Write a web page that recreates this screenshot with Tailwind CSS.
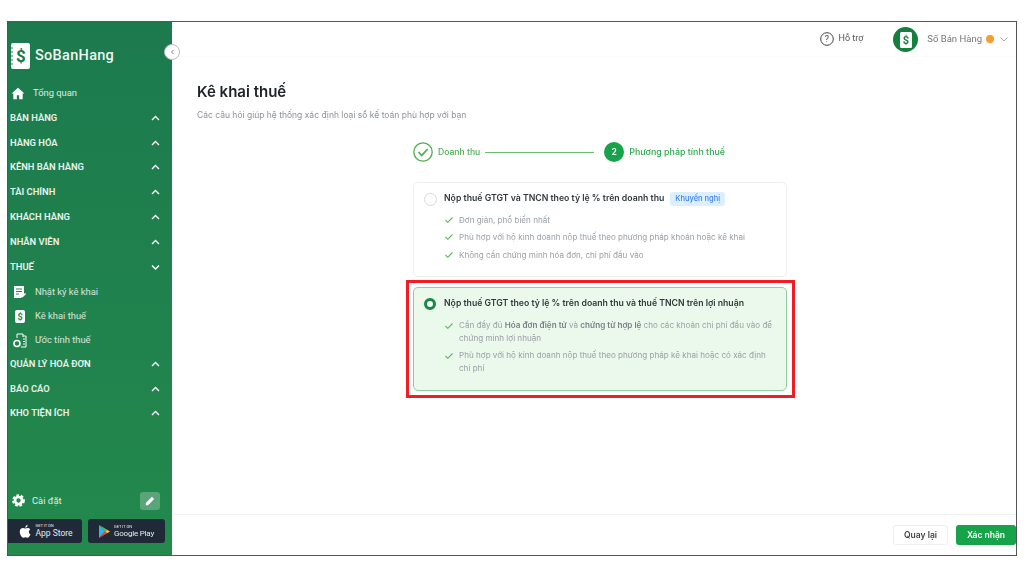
<!DOCTYPE html>
<html lang="vi">
<head>
  <meta charset="UTF-8" />
  <title>Kê khai thuế</title>
  <script src="https://cdn.jsdelivr.net/npm/@tailwindcss/browser@4"></script>
</head>
<body class="bg-white font-['Inter','Noto_Sans',sans-serif] overflow-hidden">
  <div class="relative w-[1024px] h-[577px] pt-[21px] pl-[7px] blur-[0.5px]">
    <!-- Frame -->
    <div class="relative flex w-[1010px] h-[535px] border border-[#555]">

      <!-- Sidebar -->
      <aside class="flex flex-col w-[164px] shrink-0 bg-gradient-to-b from-[#1c7a4e] to-[#23894c] text-white">
        <div class="flex items-center h-[35px] mt-[16px] pl-[2px] gap-[5px]">
          <svg width="20" height="26" viewBox="0 0 20 26">
            <rect x="1" y="0" width="19" height="26" rx="2" fill="#fff"/>
            <path d="M0 5h3M0 9h3M0 13h3M0 17h3M0 21h3" stroke="#1c7a4e" stroke-width="1"/>
            <text x="11" y="19" text-anchor="middle" font-size="17" font-weight="700" fill="#1c7a4e" font-family="Roboto">$</text>
          </svg>
          <span class="font-['Roboto'] text-[14.5px] font-medium tracking-[0.3px] text-white/95">SoBanHang</span>
        </div>

        <nav class="mt-[8px] flex flex-col font-['Roboto'] text-[9.4px]">
          <a class="flex items-center h-[24.5px] pl-[3px] gap-[8px] text-white/85">
            <svg width="14" height="13" viewBox="0 0 24 22" fill="#fff"><path d="M12 1 1 11h3v10h6v-7h4v7h6V11h3z"/></svg>
            <span>Tổng quan</span>
          </a>
          <a class="flex items-center justify-between h-[24.8px] pl-[2px] pr-[12px] font-semibold text-white/90">BÁN HÀNG<svg width="9" height="6" viewBox="0 0 9 6" fill="none" stroke="#fff" stroke-width="1.4"><path d="M1 5 4.5 1.5 8 5"/></svg></a>
          <a class="flex items-center justify-between h-[24.8px] pl-[2px] pr-[12px] font-semibold text-white/90">HÀNG HÓA<svg width="9" height="6" viewBox="0 0 9 6" fill="none" stroke="#fff" stroke-width="1.4"><path d="M1 5 4.5 1.5 8 5"/></svg></a>
          <a class="flex items-center justify-between h-[24.8px] pl-[2px] pr-[12px] font-semibold text-white/90">KÊNH BÁN HÀNG<svg width="9" height="6" viewBox="0 0 9 6" fill="none" stroke="#fff" stroke-width="1.4"><path d="M1 5 4.5 1.5 8 5"/></svg></a>
          <a class="flex items-center justify-between h-[24.8px] pl-[2px] pr-[12px] font-semibold text-white/90">TÀI CHÍNH<svg width="9" height="6" viewBox="0 0 9 6" fill="none" stroke="#fff" stroke-width="1.4"><path d="M1 5 4.5 1.5 8 5"/></svg></a>
          <a class="flex items-center justify-between h-[24.8px] pl-[2px] pr-[12px] font-semibold text-white/90">KHÁCH HÀNG<svg width="9" height="6" viewBox="0 0 9 6" fill="none" stroke="#fff" stroke-width="1.4"><path d="M1 5 4.5 1.5 8 5"/></svg></a>
          <a class="flex items-center justify-between h-[24.8px] pl-[2px] pr-[12px] font-semibold text-white/90">NHÂN VIÊN<svg width="9" height="6" viewBox="0 0 9 6" fill="none" stroke="#fff" stroke-width="1.4"><path d="M1 5 4.5 1.5 8 5"/></svg></a>
          <a class="flex items-center justify-between h-[24.8px] pl-[2px] pr-[12px] font-semibold text-white/90">THUẾ<svg width="9" height="6" viewBox="0 0 9 6" fill="none" stroke="#fff" stroke-width="1.4"><path d="M1 1.5 4.5 5 8 1.5"/></svg></a>

          <a class="flex items-center h-[25px] pl-[5px] gap-[8px] text-white/80">
            <svg width="14" height="14" viewBox="0 0 14 14"><path d="M1 1h10v9l-3 3H1z" fill="#fff"/><path d="M3 4h6M3 6.500h6M3 9h3" stroke="#23894c"/><path d="m9 12 3.500-3.500" stroke="#fff" stroke-width="1.400"/></svg>
            <span>Nhật ký kê khai</span>
          </a>
          <a class="flex items-center h-[24px] pl-[6px] gap-[9px] text-white/80">
            <svg width="12" height="13" viewBox="0 0 12 13"><rect x="1" width="10" height="13" rx="2" fill="#fff"/><text x="6" y="10" text-anchor="middle" font-size="9" font-weight="700" fill="#23894c" font-family="Roboto">$</text></svg>
            <span>Kê khai thuế</span>
          </a>
          <a class="flex items-center h-[24px] pl-[5px] gap-[8px] text-white/80">
            <svg width="14" height="15" viewBox="0 0 14 15" fill="none" stroke="#fff"><path d="M4 5V1h6v3M10 3h3v11H8"/><circle cx="4" cy="10.500" r="3" stroke-width="1.600"/><path d="M10 6h2M10 8.500h2M10 11h2"/></svg>
            <span>Ước tính thuế</span>
          </a>

          <a class="flex items-center justify-between h-[24.5px] pl-[2px] pr-[12px] font-semibold text-white/90">QUẢN LÝ HOÁ ĐƠN<svg width="9" height="6" viewBox="0 0 9 6" fill="none" stroke="#fff" stroke-width="1.4"><path d="M1 5 4.5 1.5 8 5"/></svg></a>
          <a class="flex items-center justify-between h-[24.5px] pl-[2px] pr-[12px] font-semibold text-white/90">BÁO CÁO<svg width="9" height="6" viewBox="0 0 9 6" fill="none" stroke="#fff" stroke-width="1.4"><path d="M1 5 4.5 1.5 8 5"/></svg></a>
          <a class="flex items-center justify-between h-[24.5px] pl-[2px] pr-[12px] font-semibold text-white/90">KHO TIỆN ÍCH<svg width="9" height="6" viewBox="0 0 9 6" fill="none" stroke="#fff" stroke-width="1.4"><path d="M1 5 4.5 1.5 8 5"/></svg></a>
        </nav>

        <div class="mt-auto">
          <div class="flex items-center justify-between pl-[4px] pr-[12px] h-[18px]">
            <div class="flex items-center gap-[7px] font-['Roboto'] text-[9.4px] text-white/85">
              <svg width="13" height="13" viewBox="0 0 24 24" fill="none" stroke="#fff"><circle cx="12" cy="12" r="6.500" stroke-width="5"/><circle cx="12" cy="12" r="10" stroke-width="3.500" stroke-dasharray="5 3.380"/></svg>
              <span>Cài đặt</span>
            </div>
            <div class="flex items-center justify-center w-[20px] h-[18px] rounded-[3px] bg-white/25">
              <svg width="10" height="10" viewBox="0 0 10 10" fill="#fff"><path d="M7 .8 9.200 3 3 9.200H.8V7z"/></svg>
            </div>
          </div>
          <div class="flex gap-[6px] mt-[9px] mb-[12px]">
            <div class="flex items-center justify-center gap-[4px] w-[74px] h-[24px] rounded-r-[3px] bg-[#1f2937] pl-[2px]">
              <svg width="12" height="14" viewBox="0 0 24 28" fill="#fff"><path d="M17 3c0 2.500-2 4.500-4.500 4.500C12.500 5 14.500 3 17 1.500zM12.500 9c1.500 0 3-1 5-1 2 0 4 1 5 3-4 2.500-3.500 8 .5 9.500-1 3-3.500 7-6 7-1.500 0-2.500-1-4-1s-2.500 1-4 1C5.500 27.500 1.500 21 1.500 15.500 1.500 10.500 4.500 8 7.500 8c2 0 3.500 1 5 1z"/></svg>
              <div class="flex flex-col font-['Roboto'] text-white/90 leading-none">
                <span class="text-[4px] mb-[1px]">GET IT ON</span>
                <span class="text-[8.500px]">App Store</span>
              </div>
            </div>
            <div class="flex items-center justify-center gap-[4px] w-[77px] h-[24px] rounded-[3px] bg-[#1f2937]">
              <svg width="11" height="13" viewBox="0 0 12 14"><path d="M0 0 6.500 7 0 14z" fill="#29b6f6"/><path d="M0 0 9 5 6.500 7z" fill="#43c46a"/><path d="M0 14 9 9 6.500 7z" fill="#ef4444"/><path d="M9 5 12 7 9 9 6.500 7z" fill="#fbbf24"/></svg>
              <div class="flex flex-col font-['Roboto'] text-white/90 leading-none">
                <span class="text-[4px] mb-[1px]">GET IT ON</span>
                <span class="text-[8px] tracking-[-0.2px]">Google Play</span>
              </div>
            </div>
          </div>
        </div>
      </aside>

      <!-- Collapse toggle -->
      <button class="absolute left-[156px] top-[22px] flex items-center justify-center w-[16px] h-[16px] rounded-full bg-white border border-[#bbb]">
        <svg width="5" height="6" viewBox="0 0 5 6" fill="none" stroke="#888"><path d="M3.500 1 1.500 3l2 2"/></svg>
      </button>

      <!-- Main -->
      <main class="flex flex-col flex-1 min-w-0">
        <header class="flex items-center justify-end h-[35px] pr-[8px] border-b border-[#fafafa] font-['Roboto'] shrink-0">
          <svg width="14" height="14" viewBox="0 0 14 14" fill="none" stroke="#444"><circle cx="7" cy="7" r="6.300"/><text x="7" y="10" text-anchor="middle" font-size="9" fill="#444" stroke="none" font-family="Roboto">?</text></svg>
          <span class="ml-[5px] text-[9px] text-[#555]">Hỗ trợ</span>
          <div class="relative flex items-center justify-center ml-[30px] w-[25px] h-[25px] rounded-full bg-[#15803d] mt-[1px]">
            <svg width="13" height="16" viewBox="0 0 13 16"><rect x="1" width="12" height="16" rx="1.500" fill="#fff"/><text x="7" y="12" text-anchor="middle" font-size="11" font-weight="700" fill="#15803d" font-family="Roboto">$</text></svg>
          </div>
          <span class="ml-[9px] text-[9.5px] text-[#777]">Số Bán Hàng</span>
          <span class="ml-[4px] w-[8px] h-[8px] rounded-full bg-[#f59e2e]"></span>
          <svg class="ml-[6px]" width="8" height="5" viewBox="0 0 8 5" fill="none" stroke="#aaa"><path d="M.5.5 4 4 7.500.5"/></svg>
        </header>

        <div class="flex-1 min-h-0 pl-[25px]">
          <h1 class="mt-[24px] text-[15px] leading-[22px] font-semibold text-[#1f2328]">Kê khai thuế</h1>
          <p class="mt-[6px] text-[8.500px] leading-[12px] text-[#8b9199]">Các câu hỏi giúp hệ thống xác định loại sổ kế toán phù hợp với bạn</p>

          <!-- Steps -->
          <div class="flex items-center ml-[216px] mt-[21px] h-[20px]">
            <svg width="20" height="20" viewBox="0 0 20 20" fill="none" stroke="#4caf50" stroke-width="1.300"><circle cx="10" cy="10" r="9.200"/><path d="m5.500 10 3.200 3.400 6-6.400" stroke-width="1.700"/></svg>
            <span class="ml-[5px] text-[8.600px] font-medium text-[#4caf50]">Doanh thu</span>
            <span class="ml-[5px] w-[109px] h-px bg-[#6bbd6e]"></span>
            <span class="flex items-center justify-center ml-[10px] w-[20px] h-[20px] rounded-full bg-[#16a34a] text-white text-[8.500px] font-semibold">2</span>
            <span class="ml-[5px] text-[8.900px] font-medium text-[#2fa84f]">Phương pháp tính thuế</span>
          </div>

          <!-- Option 1 -->
          <div class="ml-[216px] mt-[20px] w-[374px] h-[95px] pt-[9px] pl-[10px] border border-[#eeeeee] rounded-[5px] bg-white">
            <div class="flex items-center h-[14px]">
              <span class="w-[13px] h-[13px] rounded-full border border-[#d9d9d9]"></span>
              <span class="ml-[7px] text-[8.730px] font-semibold text-[#33383d]">Nộp thuế GTGT và TNCN theo tỷ lệ % trên doanh thu</span>
              <span class="ml-[6px] px-[5px] h-[14px] leading-[14px] rounded-[3px] bg-[#dbeffe] text-[#3b82f6] text-[7.500px] font-medium">Khuyến nghị</span>
            </div>
            <ul class="mt-[5px] ml-[21px] text-[8.100px] text-[#9aa0a6]">
              <li class="flex items-center h-[17.500px] gap-[6px]"><svg width="8" height="6" viewBox="0 0 8 6" fill="none" stroke="#5cb85c" stroke-width="1.100"><path d="m.5 3 2.300 2.300L7.500.5"/></svg>Đơn giản, phổ biến nhất</li>
              <li class="flex items-center h-[17.500px] gap-[6px]"><svg width="8" height="6" viewBox="0 0 8 6" fill="none" stroke="#5cb85c" stroke-width="1.100"><path d="m.5 3 2.300 2.300L7.500.5"/></svg>Phù hợp với hộ kinh doanh nộp thuế theo phương pháp khoán hoặc kê khai</li>
              <li class="flex items-center h-[17.500px] gap-[6px]"><svg width="8" height="6" viewBox="0 0 8 6" fill="none" stroke="#5cb85c" stroke-width="1.100"><path d="m.5 3 2.300 2.300L7.500.5"/></svg>Không cần chứng minh hóa đơn, chi phí đầu vào</li>
            </ul>
          </div>

          <!-- Option 2 -->
          <div class="ml-[216px] mt-[10px] w-[374px] h-[104px] pt-[9px] pl-[10px] border border-[#8fcf9f] rounded-[5px] bg-[#ebf8ec]">
            <div class="flex items-center h-[14px]">
              <span class="w-[12px] h-[12px] rounded-full border-[3px] border-[#16883f] bg-white"></span>
              <span class="ml-[8px] text-[8.700px] font-semibold text-[#33383d]">Nộp thuế GTGT theo tỷ lệ % trên doanh thu và thuế TNCN trên lợi nhuận</span>
            </div>
            <ul class="mt-[8px] ml-[21px] text-[8.100px] leading-[12.500px] text-[#9aa0a6]">
              <li class="flex gap-[6px]">
                <svg class="mt-[4px] shrink-0" width="8" height="6" viewBox="0 0 8 6" fill="none" stroke="#5cb85c" stroke-width="1.100"><path d="m.5 3 2.300 2.300L7.500.5"/></svg>
                <span class="w-[318px]">Cần đầy đủ <b class="font-semibold text-[#7a7f85]">Hóa đơn điện tử</b> và <b class="font-semibold text-[#7a7f85]">chứng từ hợp lệ</b> cho các khoản chi phí đầu vào để chứng minh lợi nhuận</span>
              </li>
              <li class="flex gap-[6px] mt-[5px]">
                <svg class="mt-[4px] shrink-0" width="8" height="6" viewBox="0 0 8 6" fill="none" stroke="#5cb85c" stroke-width="1.100"><path d="m.5 3 2.300 2.300L7.500.5"/></svg>
                <span class="w-[318px]">Phù hợp với hộ kinh doanh nộp thuế theo phương pháp kê khai hoặc có xác định chi phí</span>
              </li>
            </ul>
          </div>
        </div>

        <!-- Footer -->
        <footer class="flex items-center justify-end gap-[8px] h-[41px] border-t border-[#f2f2f2] shrink-0">
          <button class="w-[55px] h-[20px] rounded-[3px] border border-[#eeeeee] bg-white text-[8.500px] font-semibold text-[#444]">Quay lại</button>
          <button class="w-[60px] h-[20px] rounded-[3px] bg-[#16a34a] text-[8.500px] font-semibold text-white">Xác nhận</button>
        </footer>
      </main>
    </div>

    <!-- Red annotation box -->
    <div class="absolute left-[406px] top-[280px] w-[389px] h-[118px] border-[3px] border-[#f01e24]"></div>
  </div>
</body>
</html>
